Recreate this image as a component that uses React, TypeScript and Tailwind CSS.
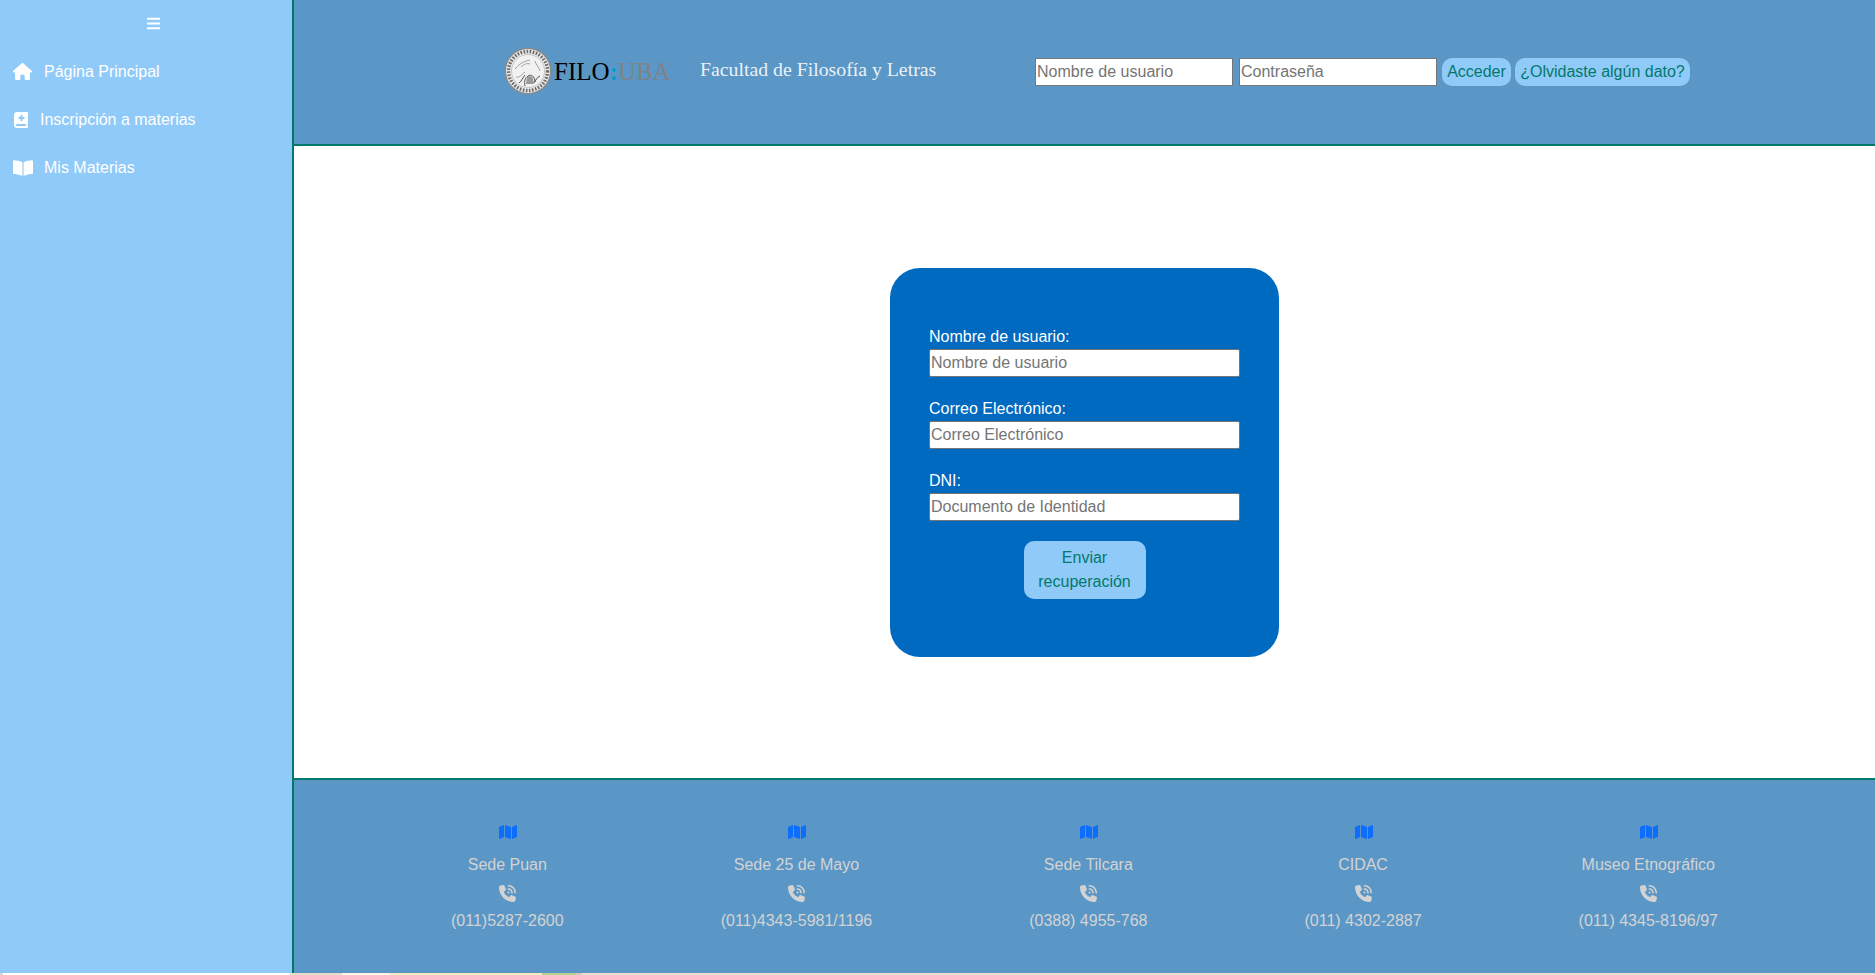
import { FaBars, FaBookMedical, FaBookOpen, FaMap } from "react-icons/fa";
import { FaHouse, FaPhoneVolume } from "react-icons/fa6";
import type { ReactNode } from "react";

const sedes = [
  { name: "Sede Puan", phone: "(011)5287-2600" },
  { name: "Sede 25 de Mayo", phone: "(011)4343-5981/1196" },
  { name: "Sede Tilcara", phone: "(0388) 4955-768" },
  { name: "CIDAC", phone: "(011) 4302-2887" },
  { name: "Museo Etnográfico", phone: "(011) 4345-8196/97" },
];

function NavItem({ icon, label, gap }: { icon: ReactNode; label: string; gap: string }) {
  return (
    <a className={`flex h-12 items-center pl-[13px] text-white ${gap}`}>
      {icon}
      <span>{label}</span>
    </a>
  );
}

function Seal() {
  return (
    <svg width="48" height="48" viewBox="0 0 48 48" className="shrink-0">
      <circle cx="24" cy="24" r="23.5" fill="#8a8a8a" />
      <circle cx="24" cy="24" r="22" fill="#e9e9e9" />
      <circle cx="24" cy="24" r="19.5" fill="none" stroke="#6a6a6a" strokeWidth="3.4" strokeDasharray="1.6 1.5" />
      <circle cx="24" cy="24" r="16.5" fill="#f1f1f1" stroke="#a0a0a0" strokeWidth="0.5" />
      <path d="M11 22c4-5 9-8 15-9M17 20c3-3 6-4 9-3M31 14c1 4 4 6 5 10M12 30c4 1 6-3 9-5" fill="none" stroke="#8c8c8c" strokeWidth="0.8" />
      <path d="M15 36c3-2 4-6 6-8M30 36c2-3 3-6 6-7M21 39c-1-5 0-8 3-10s7 0 7 6" fill="none" stroke="#555" strokeWidth="1" />
      <path d="M23 30c2-2 5-1 6 1l1 6h-8z" fill="#9a9a9a" />
    </svg>
  );
}

function Field({ label, placeholder }: { label: string; placeholder: string }) {
  return (
    <div className="mb-5">
      <label className="block h-6 leading-6 text-white">{label}</label>
      <input
        placeholder={placeholder}
        className="block h-7 w-[311px] rounded-[2px] border border-[#767676] bg-white px-[1px] text-base outline-none placeholder:text-[#757575]"
      />
    </div>
  );
}

export default function App() {
  return (
    <div className="font-['Liberation_Sans',Arial,sans-serif] text-base">
      <div className="flex h-[973px] w-full">
        {/* Sidebar */}
        <aside className="w-[294px] shrink-0 border-r-2 border-[#00796b] bg-[#90caf9]">
          <div className="flex h-[46px] items-center justify-end pr-[131px] text-white">
            <FaBars size={15} />
          </div>
          <nav className="mt-[2px]">
            <NavItem icon={<FaHouse size={19} className="-mt-[2px]" />} label="Página Principal" gap="gap-[12px]" />
            <NavItem icon={<FaBookMedical size={16} className="-mt-[1px]" />} label="Inscripción a materias" gap="gap-[11px]" />
            <NavItem icon={<FaBookOpen size={20} className="-mt-[1px]" />} label="Mis Materias" gap="gap-[11px]" />
          </nav>
        </aside>

        <div className="flex min-w-0 flex-1 flex-col">
          {/* Header */}
          <header className="flex h-[146px] shrink-0 items-center border-b-2 border-[#00796b] bg-[#5b97c6] pb-[2px] pl-[210px]">
            <Seal />
            <div className="ml-[2px] w-[124px] font-['Liberation_Serif',serif] text-[25px] leading-none whitespace-nowrap text-black">
              FILO<span className="font-bold text-[#0a9ccb]">:</span>
              <span className="text-[#7f8287]">UBA</span>
            </div>
            <h1 className="mb-[2px] ml-[22px] w-[335px] font-['Liberation_Serif',serif] text-[19.8px] text-[#eaf1f7]">
              Facultad de Filosofía y Letras
            </h1>
            <form className="mt-[2px] flex items-center">
              <input
                placeholder="Nombre de usuario"
                className="h-7 w-[198px] border border-[#767676] bg-white px-[1px] text-base outline-none placeholder:text-[#757575]"
              />
              <input
                placeholder="Contraseña"
                className="ml-[6px] h-7 w-[198px] border border-[#767676] bg-white px-[1px] text-base outline-none placeholder:text-[#757575]"
              />
              <button type="button" className="ml-[5px] h-7 w-[69px] rounded-[10px] bg-[#90caf9] text-[#00796b]">
                Acceder
              </button>
              <button type="button" className="ml-[4px] h-7 w-[175px] rounded-[10px] bg-[#90caf9] text-[#00796b]">
                ¿Olvidaste algún dato?
              </button>
            </form>
          </header>

          {/* Recovery form */}
          <main className="flex flex-1 items-center justify-center bg-white">
            <div className="h-[389px] w-[389px] rounded-[30px] bg-[#0069c0] px-[39px] pt-[57px]">
              <Field label="Nombre de usuario:" placeholder="Nombre de usuario" />
              <Field label="Correo Electrónico:" placeholder="Correo Electrónico" />
              <Field label="DNI:" placeholder="Documento de Identidad" />
              <button
                type="button"
                className="mx-auto block h-[58px] w-[122px] rounded-[10px] bg-[#90caf9] px-3 leading-6 text-[#00796b]"
              >
                Enviar recuperación
              </button>
            </div>
          </main>

          {/* Footer */}
          <footer className="flex h-[195px] shrink-0 justify-evenly border-t-2 border-[#00796b] bg-[#5b97c6] pt-[43px] text-[#d3d3d3]">
            {sedes.map((sede) => (
              <div key={sede.name} className="flex flex-col items-center">
                <FaMap size={18} className="ml-px text-[#0d6efd]" />
                <span className="mt-[12px] h-6 leading-6">{sede.name}</span>
                <FaPhoneVolume size={17} className="mt-[8px] ml-px" />
                <span className="mt-[7px] h-6 leading-6">{sede.phone}</span>
              </div>
            ))}
          </footer>
        </div>
      </div>

      <div className="flex h-[2px] bg-[#ecdcd2]">
        <div className="w-[3px] bg-[#e0d8cc]" />
        <div className="w-[287px] bg-white" />
        <div className="w-[52px] bg-[#e6dccb]" />
        <div className="w-[48px] bg-[#faf6e8]" />
        <div className="w-[152px] bg-[#f5e9bf]" />
        <div className="w-[33px] bg-[#b3d48e]" />
        <div className="w-[7px] bg-[#d8c8c0]" />
      </div>
    </div>
  );
}
